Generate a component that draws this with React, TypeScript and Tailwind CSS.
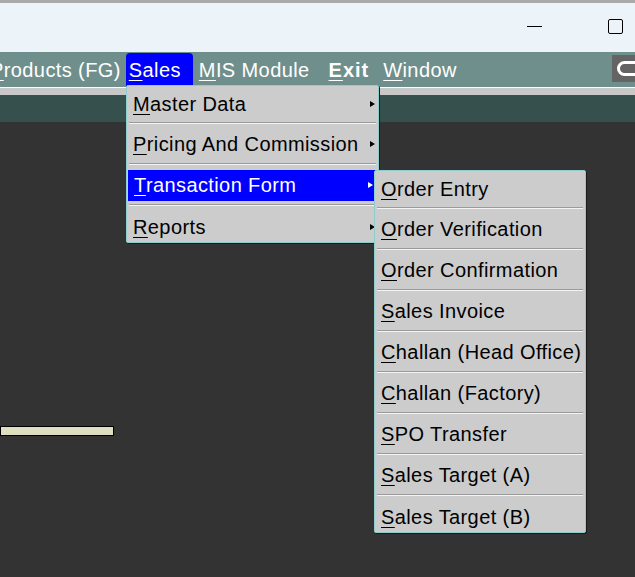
import React from 'react';

const SALES_ITEMS = ['Master Data', 'Pricing And Commission', 'Transaction Form', 'Reports'];
const TRANSACTION_ITEMS = [
  'Order Entry',
  'Order Verification',
  'Order Confirmation',
  'Sales Invoice',
  'Challan (Head Office)',
  'Challan (Factory)',
  'SPO Transfer',
  'Sales Target (A)',
  'Sales Target (B)',
];

const font = { fontFamily: '"Liberation Sans", Arial, sans-serif' };

function Mnemonic({ text }: { text: string }) {
  return (
    <>
      <span className="underline decoration-1 underline-offset-[3px]">{text[0]}</span>
      {text.slice(1)}
    </>
  );
}

function Separator() {
  return (
    <div className="mx-[2px] flex flex-col">
      <div className="h-px bg-[#9a9a9a]" />
      <div className="h-px bg-[#f4f4f4]" />
    </div>
  );
}

function MenuItem({ label, first, last, active, arrow }: { label: string; first?: boolean; last?: boolean; active?: boolean; arrow?: boolean }) {
  const h = first ? 'h-[36px]' : last ? 'h-[36px] pt-[5px]' : 'h-[39px] pt-px';
  return (
    <div className={`${h} flex items-center`}>
      <div className={`relative flex h-[31px] w-full items-center pl-[6px] ${active ? 'ml-px mr-[2px] bg-[#0000ff] text-white' : 'text-black'}`}>
        <span className="whitespace-nowrap"><Mnemonic text={label} /></span>
        {arrow && (
          <span className={`absolute right-[3px] top-1/2 -translate-y-1/2 border-y-[3.5px] border-l-[5px] border-y-transparent ${active ? 'border-l-white' : 'border-l-black'}`} />
        )}
      </div>
    </div>
  );
}

export default function App() {
  return (
    <div className="relative flex h-[577px] w-[635px] flex-col overflow-hidden bg-[#333333] text-[20px] tracking-[0.02em]" style={font}>
      {/* title bar */}
      <div className="flex h-[52px] shrink-0 items-start border-t-[3px] border-[#a9a9a9] bg-[#ecf4f9]">
        <div className="ml-[527px] mt-[23px] h-px w-[15px] bg-black" />
        <div className="ml-[66px] mt-[16px] h-[15px] w-[15px] rounded-[2px] border-[1.5px] border-black" />
      </div>

      {/* menu bar */}
      <div className="flex h-[35px] shrink-0 items-center bg-[#6f8f8c] pt-px text-white">
        <span className="ml-[-10px] whitespace-nowrap"><Mnemonic text="Products (FG)" /></span>
        <span className="ml-[5px] flex h-[35px] items-center rounded-t-[4px] bg-[#0000ff] pl-[3px] pr-[12px]"><Mnemonic text="Sales" /></span>
        <span className="ml-[6px] whitespace-nowrap"><Mnemonic text="MIS Module" /></span>
        <span className="ml-[19px] font-bold tracking-[0.05em]"><Mnemonic text="Exit" /></span>
        <span className="ml-[14px]"><Mnemonic text="Window" /></span>
        <div className="ml-auto mt-[2px] flex h-[27px] w-[23px] shrink-0 items-center self-start bg-[#646464] pl-[5px]">
          <div className="h-[15px] w-[30px] shrink-0 rounded-full border-[3px] border-white" />
        </div>
      </div>

      <div className="h-px shrink-0 bg-white" />
      <div className="h-[7px] shrink-0 bg-[#c8c8c8]" />
      <div className="h-[27px] shrink-0 bg-[#36504e]" />

      {/* workspace */}
      <div className="flex-1">
        <div className="mt-[304px] h-[10px] w-[114px] border border-black bg-[#dedec0]" />
      </div>

      {/* Sales dropdown */}
      <div className="absolute left-[126px] top-[85px] w-[253px] rounded-[2px] border border-[#8fcccc] bg-[#cccccc] shadow-[1px_1px_0_#1a1a1a]">
        {SALES_ITEMS.map((item, i) => (
          <React.Fragment key={item}>
            {i > 0 && <Separator />}
            <MenuItem label={item} first={i === 0} last={i === SALES_ITEMS.length - 1} active={i === 2} arrow />
          </React.Fragment>
        ))}
      </div>

      {/* Transaction Form submenu */}
      <div className="absolute left-[374px] top-[170px] w-[212px] rounded-[2px] border border-[#8fcccc] bg-[#cccccc] shadow-[1px_1px_0_#1a1a1a]">
        {TRANSACTION_ITEMS.map((item, i) => (
          <React.Fragment key={item}>
            {i > 0 && <Separator />}
            <MenuItem label={item} first={i === 0} last={i === TRANSACTION_ITEMS.length - 1} />
          </React.Fragment>
        ))}
      </div>
    </div>
  );
}
